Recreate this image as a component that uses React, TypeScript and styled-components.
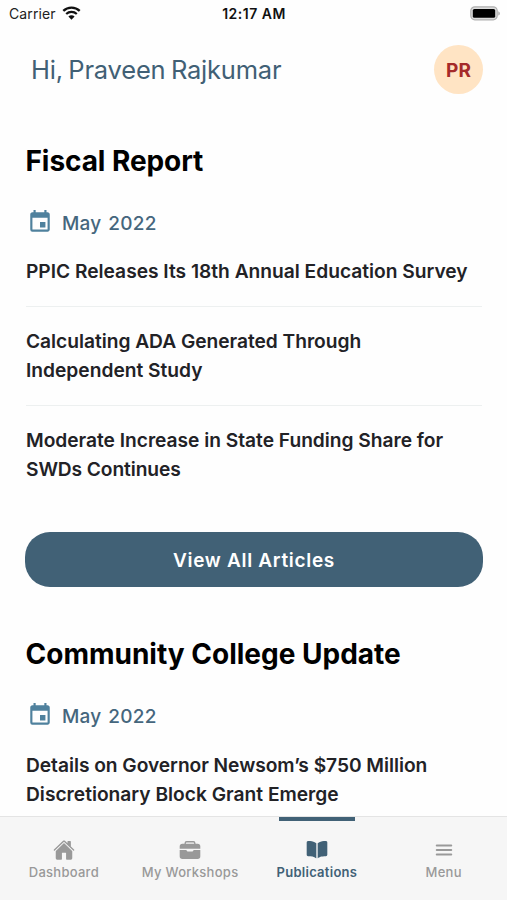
import React from "react";
import styled, { createGlobalStyle } from "styled-components";
import { IoHome, IoBriefcase, IoBook, IoMenu } from "react-icons/io5";
import { MdEvent } from "react-icons/md";

const GlobalStyle = createGlobalStyle`
  *, *::before, *::after { box-sizing: border-box; }
  html, body { margin: 0; padding: 0; }
  body { font-family: Inter, "Liberation Sans", sans-serif; background: #fff; }
`;

const Screen = styled.div`
  width: 507px;
  height: 900px;
  display: flex;
  flex-direction: column;
  overflow: hidden;
  background: #fefefe;
`;

const StatusBar = styled.div`
  flex: none;
  height: 28px;
  padding: 0 7px 0 9px;
  display: grid;
  grid-template-columns: 1fr auto 1fr;
  align-items: center;
  color: #111;
  font-size: 14px;
  line-height: 28px;
`;

const Carrier = styled.div`
  display: flex;
  align-items: center;
  gap: 6px;
  color: #222;
  letter-spacing: 0.1px;

  svg { margin-top: -2px; }
`;

const Clock = styled.div`
  font-weight: 600;
  letter-spacing: 0.5px;
  margin-left: -1px;
`;

const BatterySlot = styled.div`
  display: flex;
  justify-content: flex-end;
  margin-top: -2px;
`;

const Header = styled.header`
  flex: none;
  height: 83px;
  padding: 0 24px 0 31px;
  display: flex;
  align-items: center;
  justify-content: space-between;
`;

const Greeting = styled.div`
  color: #416075;
  font-size: 25.5px;
  letter-spacing: -0.2px;
  word-spacing: -1.5px;
  font-weight: 400;
  white-space: nowrap;
`;

const Avatar = styled.div`
  width: 49px;
  height: 49px;
  border-radius: 50%;
  background: #ffe4c4;
  color: #a52a2a;
  display: flex;
  align-items: center;
  justify-content: center;
  padding-top: 1px;
  font-size: 19px;
  font-weight: 650;
`;

const Content = styled.main`
  flex: 1;
  min-height: 0;
  overflow: hidden;
  padding: 33px 25px 0 26px;
`;

const Section = styled.section`
  margin-bottom: 50px;
`;

const Title = styled.h2<{ $spacing: number }>`
  margin: 0 0 0 -0.5px;
  color: #000;
  font-size: 28px;
  font-weight: 700;
  line-height: 34px;
  letter-spacing: ${(p) => p.$spacing}px;
  white-space: nowrap;
`;

const Issue = styled.div`
  margin-top: 31px;
  height: 28px;
  padding-left: 1px;
  display: flex;
  align-items: center;
  gap: 9px;
  color: #45667d;
  font-size: 19px;
  font-weight: 550;
  letter-spacing: 0.25px;
  word-spacing: 1.5px;

  ${Section} + ${Section} & {
    margin-top: 32px;
  }

  svg {
    color: #4f819d;
    margin-top: -3px;
  }
`;

const Articles = styled.div`
  margin-top: 20px;
`;

const Article = styled.div`
  padding-bottom: 19.5px;
  color: #222226;
  font-size: 19.2px;
  font-weight: 560;
  line-height: 29.3px;

  & + & {
    border-top: 1px solid #edf0f0;
    padding-top: 20px;
  }
`;

const Line = styled.div<{ $spacing: number }>`
  letter-spacing: ${(p) => p.$spacing}px;
  white-space: nowrap;
`;

const PrimaryButton = styled.button`
  display: block;
  width: 458px;
  height: 55px;
  margin: 28px 0 0 -1px;
  padding: 2px 0 0;
  border: 0;
  border-radius: 25px;
  background: #416176;
  color: #fff;
  font-family: inherit;
  font-size: 19px;
  font-weight: 640;
  letter-spacing: 0.7px;
`;

const TabBar = styled.nav`
  flex: none;
  height: 84px;
  border-top: 1px solid #e4e4e4;
  background: #f6f6f6;
  display: grid;
  grid-template-columns: repeat(4, 1fr);
`;

const Tab = styled.div<{ $active?: boolean }>`
  display: flex;
  flex-direction: column;
  align-items: center;
  color: ${(p) => (p.$active ? "#416176" : "#999")};
  font-size: 13px;
  font-weight: ${(p) => (p.$active ? 560 : 500)};
  letter-spacing: 0.27px;
  line-height: 18px;
  white-space: nowrap;

  &::before {
    content: "";
    width: 76px;
    height: 4px;
    margin-bottom: 17px;
    background: ${(p) => (p.$active ? "#416176" : "transparent")};
  }

  &:first-child { padding-left: 1px; }

  svg { margin: 1px 0 2px; }
`;

const WifiIcon = () => (
  <svg width="19" height="14" viewBox="0 0 19 14" fill="none">
    <path d="M1.3 4.9a11.7 11.7 0 0 1 16.4 0" stroke="#111" strokeWidth="2.3" />
    <path d="M4.2 8a7.6 7.6 0 0 1 10.6 0" stroke="#111" strokeWidth="2.2" />
    <path d="M9.5 13.8 6.4 10.5a4.4 4.4 0 0 1 6.2 0z" fill="#111" />
  </svg>
);

const BatteryIcon = () => (
  <svg width="30" height="15" viewBox="0 0 30 15">
    <rect x="0.8" y="0.8" width="26.4" height="13" rx="4" fill="#ddd" stroke="#b0b0b0" strokeWidth="1.2" />
    <rect x="2.8" y="2.9" width="22.4" height="8.9" rx="1.6" fill="#000" />
    <path d="M28.3 5.2c2 .8 2 3.6 0 4.4z" fill="#aaa" />
  </svg>
);

type TextLine = [text: string, spacing: number];

interface Publication {
  title: string;
  spacing: number;
  issue: string;
  articles: TextLine[][];
  action?: string;
}

const publications: Publication[] = [
  {
    title: "Fiscal Report",
    spacing: -0.07,
    issue: "May 2022",
    articles: [
      [["PPIC Releases Its 18th Annual Education Survey", -0.01]],
      [["Calculating ADA Generated Through", -0.03], ["Independent Study", 0]],
      [["Moderate Increase in State Funding Share for", -0.02], ["SWDs Continues", -0.1]],
    ],
    action: "View All Articles",
  },
  {
    title: "Community College Update",
    spacing: 0,
    issue: "May 2022",
    articles: [
      [["Details on Governor Newsom’s $750 Million", -0.04], ["Discretionary Block Grant Emerge", 0]],
    ],
  },
];

const tabs = [
  { label: "Dashboard", Icon: IoHome },
  { label: "My Workshops", Icon: IoBriefcase },
  { label: "Publications", Icon: IoBook, active: true },
  { label: "Menu", Icon: IoMenu },
];

export default function App() {
  return (
    <>
      <GlobalStyle />
      <Screen>
        <StatusBar>
          <Carrier>
            Carrier
            <WifiIcon />
          </Carrier>
          <Clock>12:17 AM</Clock>
          <BatterySlot>
            <BatteryIcon />
          </BatterySlot>
        </StatusBar>
        <Header>
          <Greeting>Hi, Praveen Rajkumar</Greeting>
          <Avatar>PR</Avatar>
        </Header>
        <Content>
          {publications.map((pub) => (
            <Section key={pub.title}>
              <Title $spacing={pub.spacing}>{pub.title}</Title>
              <Issue>
                <MdEvent size={26} />
                {pub.issue}
              </Issue>
              <Articles>
                {pub.articles.map((lines) => (
                  <Article key={lines[0][0]}>
                    {lines.map(([text, spacing]) => (
                      <Line key={text} $spacing={spacing}>{text}</Line>
                    ))}
                  </Article>
                ))}
              </Articles>
              {pub.action && <PrimaryButton>{pub.action}</PrimaryButton>}
            </Section>
          ))}
        </Content>
        <TabBar>
          {tabs.map(({ label, Icon, active }) => (
            <Tab key={label} $active={active}>
              <Icon size={22} />
              {label}
            </Tab>
          ))}
        </TabBar>
      </Screen>
    </>
  );
}
